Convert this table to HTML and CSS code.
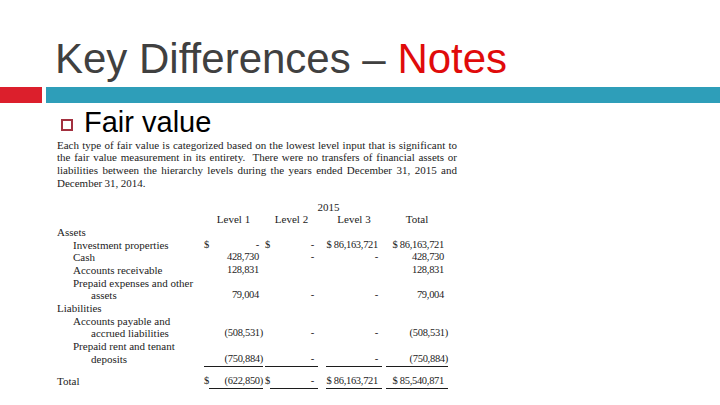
FILE: index.html
```html
<!DOCTYPE html>
<html lang="en">
<head>
<meta charset="utf-8">
<title>Key Differences – Notes</title>
<link rel="stylesheet" href="styles.css">
</head>
<body>
<div class="slide">
  <h1 class="title">Key Differences – <span class="accent">Notes</span></h1>
  <div class="rule"><div class="rule-red"></div><div class="rule-teal"></div></div>
  <div class="bullet"><span class="box"></span><span class="bullet-text">Fair value</span></div>
  <div class="note">
    <div class="para">
      <div class="pline">Each type of fair value is categorized based on the lowest level input that is significant to</div>
      <div class="pline">the fair value measurement in its entirety.&nbsp; There were no transfers of financial assets or</div>
      <div class="pline">liabilities between the hierarchy levels during the years ended December 31, 2015 and</div>
      <div class="pline last">December 31, 2014.</div>
    </div>
    <div class="fv">
      <div class="row">
        <div class="lbl"></div>
        <div class="year">2015</div>
      </div>
      <div class="row">
        <div class="lbl"></div>
        <div class="hd c1">Level 1</div>
        <div class="hd c2">Level 2</div>
        <div class="hd c3">Level 3</div>
        <div class="hd c4">Total</div>
      </div>
      <div class="row">
        <div class="lbl">Assets</div>
      </div>
      <div class="row">
        <div class="lbl i1">Investment properties</div>
        <div class="cell c1"><span class="cur">$</span><span class="val">-</span></div>
        <div class="cell c2"><span class="cur">$</span><span class="val">-</span></div>
        <div class="cell c3"><span class="val">$ 86,163,721</span></div>
        <div class="cell c4"><span class="val">$ 86,163,721</span></div>
      </div>
      <div class="row">
        <div class="lbl i1">Cash</div>
        <div class="cell c1"><span class="val">428,730</span></div>
        <div class="cell c2"><span class="val">-</span></div>
        <div class="cell c3"><span class="val">-</span></div>
        <div class="cell c4"><span class="val">428,730</span></div>
      </div>
      <div class="row">
        <div class="lbl i1">Accounts receivable</div>
        <div class="cell c1"><span class="val">128,831</span></div>
        <div class="cell c2"></div>
        <div class="cell c3"></div>
        <div class="cell c4"><span class="val">128,831</span></div>
      </div>
      <div class="row">
        <div class="lbl i1">Prepaid expenses and other</div>
      </div>
      <div class="row">
        <div class="lbl i2">assets</div>
        <div class="cell c1"><span class="val">79,004</span></div>
        <div class="cell c2"><span class="val">-</span></div>
        <div class="cell c3"><span class="val">-</span></div>
        <div class="cell c4"><span class="val">79,004</span></div>
      </div>
      <div class="row">
        <div class="lbl">Liabilities</div>
      </div>
      <div class="row">
        <div class="lbl i1">Accounts payable and</div>
      </div>
      <div class="row">
        <div class="lbl i2">accrued liabilities</div>
        <div class="cell c1"><span class="val">(508,531<span class="par">)</span></span></div>
        <div class="cell c2"><span class="val">-</span></div>
        <div class="cell c3"><span class="val">-</span></div>
        <div class="cell c4"><span class="val">(508,531<span class="par">)</span></span></div>
      </div>
      <div class="row">
        <div class="lbl i1">Prepaid rent and tenant</div>
      </div>
      <div class="row">
        <div class="lbl i2">deposits</div>
        <div class="cell c1"><span class="val ul">(750,884<span class="par">)</span></span></div>
        <div class="cell c2"><span class="val ul">-</span></div>
        <div class="cell c3"><span class="val ul">-</span></div>
        <div class="cell c4"><span class="val ul">(750,884<span class="par">)</span></span></div>
      </div>
      <div class="row total">
        <div class="lbl">Total</div>
        <div class="cell c1"><span class="cur">$</span><span class="val ul">(622,850<span class="par">)</span></span></div>
        <div class="cell c2"><span class="cur">$</span><span class="val ul">-</span></div>
        <div class="cell c3"><span class="val ul">$ 86,163,721</span></div>
        <div class="cell c4"><span class="val ul">$ 85,540,871</span></div>
      </div>
    </div>
  </div>
</div>
</body>
</html>
```

FILE: styles.css
```css
html, body {
  margin: 0;
  padding: 0;
  background: #ffffff;
}

.slide {
  width: 720px;
  height: 405px;
  overflow: hidden;
  background: #ffffff;
  font-family: "Liberation Sans", Arial, sans-serif;
}

.title {
  margin: 0;
  padding: 38px 0 0 55px;
  height: 42px;
  font-size: 42px;
  line-height: 42px;
  font-weight: normal;
  color: #404040;
  white-space: nowrap;
}

.accent {
  color: #e00b0b;
}

.rule {
  display: flex;
  gap: 4px;
  margin-top: 7px;
  height: 16px;
}

.rule-red {
  width: 42px;
  background: #dc1f2c;
}

.rule-teal {
  flex: 1;
  background: #2e9eb9;
}

.bullet {
  display: flex;
  align-items: flex-start;
  margin-top: 5px;
  padding-left: 61px;
  height: 28px;
}

.box {
  width: 8px;
  height: 8px;
  margin-top: 11px;
  border: 2px solid #a3303f;
}

.bullet-text {
  margin-left: 11px;
  font-size: 29px;
  line-height: 28px;
  color: #000000;
}

.note {
  padding-left: 57px;
  margin-top: 2.6px;
  font-family: "Liberation Serif", "Times New Roman", serif;
  color: #1c1c1c;
}

.para {
  width: 400px;
  font-size: 11px;
  line-height: 12.7px;
}

.pline {
  text-align: justify;
  text-align-last: justify;
  white-space: nowrap;
  word-spacing: -0.4px;
}

.pline.last {
  text-align-last: left;
}

.fv {
  margin-top: 11.2px;
  font-size: 11px;
}

.row {
  display: grid;
  grid-template-columns: 147px 59px 55px 64px 66px;
  height: 12.7px;
  line-height: 12.7px;
}

.row.total {
  margin-top: 9.3px;
}

.lbl {
  white-space: nowrap;
}

.lbl.i1 {
  padding-left: 16px;
}

.lbl.i2 {
  padding-left: 34px;
}

.year {
  grid-column: 2 / 6;
  padding-left: 5px;
  text-align: center;
}

.hd {
  text-align: center;
}

.cell {
  display: flex;
  white-space: nowrap;
  font-size: 10.5px;
  letter-spacing: -0.3px;
}

.c1 {
  padding-left: 0;
}

.c2 {
  padding-left: 2px;
}

.c3 {
  padding-left: 8px;
}

.c4 {
  padding-left: 4px;
}

.cur {
  width: 5px;
}

.val {
  flex: 1;
  text-align: right;
  padding-right: 4px;
}

.val.ul {
  border-bottom: 1px solid #1c1c1c;
}

.par {
  margin-right: -4px;
}
```
